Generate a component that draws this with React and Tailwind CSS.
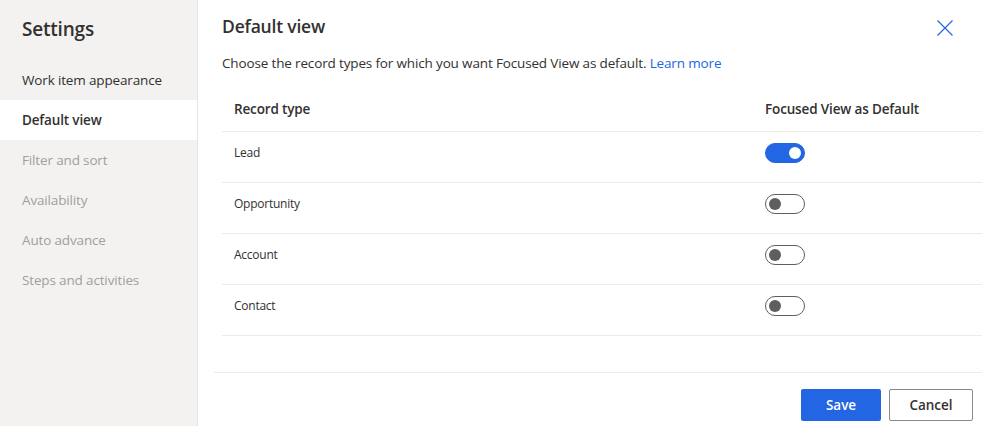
import { useState } from 'react';

const NAV = [
  { label: 'Work item appearance', state: 'normal' },
  { label: 'Default view', state: 'active' },
  { label: 'Filter and sort', state: 'disabled' },
  { label: 'Availability', state: 'disabled' },
  { label: 'Auto advance', state: 'disabled' },
  { label: 'Steps and activities', state: 'disabled' },
];

const RECORDS = [
  { id: 'lead', label: 'Lead', on: true },
  { id: 'opp', label: 'Opportunity', on: false },
  { id: 'acc', label: 'Account', on: false },
  { id: 'con', label: 'Contact', on: false },
];

function Toggle({ on, onClick }) {
  return (
    <button onClick={onClick}
      className={`w-10 h-5 rounded-full flex items-center px-[3px] box-border -mt-[7px] ${on
        ? 'bg-[#2266e3] justify-end border border-[#2266e3]'
        : 'bg-white justify-start border border-[#605e5c]'}`}>
      <span className={`w-3 h-3 rounded-full ${on ? 'bg-white' : 'bg-[#605e5c]'}`} />
    </button>
  );
}

export default function App() {
  const [recs, setRecs] = useState(RECORDS);

  return (
    <div className="w-[982px] h-[426px] flex overflow-hidden bg-white text-[#323130]"
      style={{ fontFamily: '"Segoe UI", "Open Sans", sans-serif' }}>

      {/* Sidebar */}
      <div className="w-[198px] shrink-0 bg-[#f3f2f1] border-r border-[#e8e6e4] flex flex-col">
        <div className="h-[58px] pl-[22px] flex items-center text-[19px] tracking-[-0.2px] font-semibold text-[#323130] pt-[1px]">Settings</div>
        <div className="flex flex-col pt-[2px]">
          {NAV.map(n => (
            <div key={n.label}
              className={`h-10 pl-[22px] flex items-center text-[13.5px] tracking-[-0.15px] ${n.state === 'active'
                ? 'bg-white font-semibold text-[#323130]'
                : n.state === 'disabled' ? 'text-[#a19f9d]' : 'text-[#323130]'}`}>
              {n.label}
            </div>
          ))}
        </div>
      </div>

      {/* Main */}
      <div className="flex-1 flex flex-col">
        <div className="flex items-start justify-between pl-6 pr-7 pt-[13px]">
          <div className="text-[17.5px] tracking-[-0.2px] font-semibold text-[#323130]">Default view</div>
          <button className="mt-[6px] text-[#2266e3]">
            <svg width="18" height="18" viewBox="0 0 18 18" fill="none" stroke="currentColor" strokeWidth="1.2">
              <path d="M1.5 1.5 L16.5 16.5 M16.5 1.5 L1.5 16.5" />
            </svg>
          </button>
        </div>
        <div className="pl-6 mt-[14px] text-[13.5px] tracking-[-0.15px] text-[#323130]">
          Choose the record types for which you want Focused View as default.{' '}
          <a className="text-[#2266e3]">Learn more</a>
        </div>

        {/* Table */}
        <div className="ml-6 mt-[15px]">
          <div className="h-[43px] flex items-center border-b border-[#edebe9] text-[13.5px] tracking-[-0.15px] font-semibold">
            <div className="flex-1 pl-3">Record type</div>
            <div className="w-[217px]">Focused View as Default</div>
          </div>
          {recs.map((r, i) => (
            <div key={r.id} className="h-[51px] flex items-center border-b border-[#edebe9] text-[12px] tracking-[-0.25px] text-[#323130]">
              <div className="flex-1 pl-3 -mt-[8px]">{r.label}</div>
              <div className="w-[217px] flex">
                <Toggle on={r.on} onClick={() => setRecs(recs.map((x, j) => j === i ? { ...x, on: !x.on } : x))} />
              </div>
            </div>
          ))}
        </div>

        {/* Footer */}
        <div className="mt-auto ml-4 border-t border-[#edebe9] h-[54px] flex items-start justify-end gap-2 pr-[9px] pt-[16px]">
          <button className="w-20 h-8 rounded-[2px] bg-[#2266e3] text-white text-[13.5px] font-semibold">Save</button>
          <button className="w-[84px] h-8 rounded-[2px] border border-[#8a8886] bg-white text-[#323130] text-[13.5px] font-semibold">Cancel</button>
        </div>
      </div>
    </div>
  );
}
